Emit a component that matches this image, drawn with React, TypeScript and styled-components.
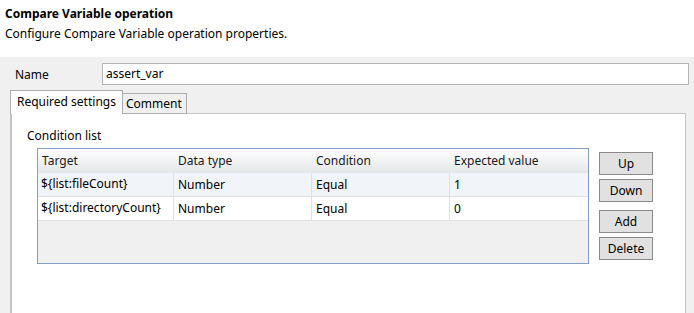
import React, { FC } from 'react';
import styled, { createGlobalStyle } from 'styled-components';

const GlobalStyle = createGlobalStyle`
	html, body {
		margin: 0;
		padding: 0;
		background: #ffffff;
	}
	body {
		font-family: 'Noto Sans', 'Liberation Sans', sans-serif;
		font-size: 12px;
		color: #000000;
	}
`;

type Row = { target: string; type: string; condition: string; expected: string };

const rows: Row[] = [
	{ target: '${list:fileCount}', type: 'Number', condition: 'Equal', expected: '1' },
	{ target: '${list:directoryCount}', type: 'Number', condition: 'Equal', expected: '0' },
];

const columns = ['Target', 'Data type', 'Condition', 'Expected value'];

const App: FC = () => {
	return (
		<Page>
			<GlobalStyle />
			<Header>
				<Title>Compare Variable operation</Title>
				<Subtitle>Configure Compare Variable operation properties.</Subtitle>
			</Header>
			<Body>
				<NameRow>
					<NameLabel>Name</NameLabel>
					<NameInput>assert_var</NameInput>
				</NameRow>
				<Tabs>
					<Tab $active>Required settings</Tab>
					<Tab>Comment</Tab>
				</Tabs>
				<TabPanel>
					<SectionLabel>Condition list</SectionLabel>
					<ListRow>
						<Table>
							<HeaderRow>
								{columns.map((c) => (
									<HeaderCell key={c}>{c}</HeaderCell>
								))}
							</HeaderRow>
							{rows.map((r, i) => (
								<DataRow key={r.target} $alt={i % 2 === 0}>
									<Cell>{r.target}</Cell>
									<Cell>{r.type}</Cell>
									<Cell>{r.condition}</Cell>
									<Cell>{r.expected}</Cell>
								</DataRow>
							))}
						</Table>
						<Buttons>
							<ButtonGroup>
								<Button>Up</Button>
								<Button>Down</Button>
							</ButtonGroup>
							<ButtonGroup>
								<Button>Add</Button>
								<Button>Delete</Button>
							</ButtonGroup>
						</Buttons>
					</ListRow>
				</TabPanel>
			</Body>
		</Page>
	);
};

const Page = styled.div`
	width: 694px;
	height: 313px;
	display: flex;
	flex-direction: column;
	overflow: hidden;
`;
const Header = styled.div`
	height: 57px;
	box-sizing: border-box;
	padding: 6px 5px 0 5px;
	display: flex;
	flex-direction: column;
	gap: 5px;
`;
const Title = styled.div`
	font-weight: bold;
	line-height: 15px;
`;
const Subtitle = styled.div`
	line-height: 15px;
`;
const Body = styled.div`
	flex: 1;
	background: #f0f0f0;
	padding: 6px 5px 0 10px;
	display: flex;
	flex-direction: column;
`;
const NameRow = styled.div`
	display: flex;
	align-items: center;
	height: 22px;
`;
const NameLabel = styled.div`
	width: 92px;
	padding-left: 5px;
	box-sizing: border-box;
`;
const NameInput = styled.div`
	flex: 1;
	height: 22px;
	box-sizing: border-box;
	border: 1px solid #b5b5b5;
	background: #ffffff;
	padding: 0 3px;
	line-height: 20px;
`;
const Tabs = styled.div`
	display: flex;
	align-items: flex-end;
	margin-top: 5px;
	height: 24px;
	position: relative;
	z-index: 1;
`;
const Tab = styled.div<{ $active?: boolean }>`
	box-sizing: border-box;
	height: ${(p) => (p.$active ? '24px' : '21px')};
	border: 1px solid #adadad;
	border-bottom: ${(p) => (p.$active ? 'none' : '1px solid #adadad')};
	border-left: ${(p) => (p.$active ? '1px solid #adadad' : 'none')};
	background: ${(p) => (p.$active ? '#ffffff' : '#f0f0f0')};
	padding: ${(p) => (p.$active ? '3px 6px 0 6px' : '2px 4px 0 3px')};
	line-height: 15px;
`;
const TabPanel = styled.div`
	flex: 1;
	margin-top: -1px;
	margin-right: 3px;
	background: #ffffff;
	border: 1px solid #c4c4c4;
	border-left: 2px solid #c4c4c4;
	border-bottom: none;
	padding: 14px 0 0 15px;
	display: flex;
	flex-direction: column;
`;
const SectionLabel = styled.div`
	line-height: 15px;
`;
const ListRow = styled.div`
	display: flex;
	margin-top: 5px;
	margin-left: 10px;
	gap: 10px;
`;
const Table = styled.div`
	width: 552px;
	height: 116px;
	box-sizing: border-box;
	border: 1px solid #829fc2;
	background: #f0f0f0;
	display: flex;
	flex-direction: column;
`;
const HeaderRow = styled.div`
	display: grid;
	grid-template-columns: 136px 138px 138px 138px;
	height: 24px;
	background: linear-gradient(#ffffff, #e4e6e9);
`;
const HeaderCell = styled.div`
	padding-left: 4px;
	line-height: 24px;
	color: #1a1a1a;
`;
const DataRow = styled.div<{ $alt?: boolean }>`
	display: grid;
	grid-template-columns: 136px 138px 138px 138px;
	height: 24px;
	box-sizing: border-box;
	border-bottom: 1px solid #e0e0e0;
	background: ${(p) => (p.$alt ? '#f1f5f9' : '#ffffff')};
`;
const Cell = styled.div`
	padding-left: 4px;
	line-height: 23px;
	border-right: 1px solid #e0e0e0;
	&:first-child {
		padding-left: 3px;
		line-height: 21px;
	}
	&:last-child {
		border-right: none;
	}
`;
const Buttons = styled.div`
	display: flex;
	flex-direction: column;
	gap: 8px;
	margin-top: 4px;
`;
const ButtonGroup = styled.div`
	display: flex;
	flex-direction: column;
	gap: 4px;
`;
const Button = styled.div`
	width: 54px;
	height: 23px;
	box-sizing: border-box;
	border: 1px solid #8a8a8a;
	background: #e1e1e1;
	text-align: center;
	line-height: 22px;
`;

export default App;
